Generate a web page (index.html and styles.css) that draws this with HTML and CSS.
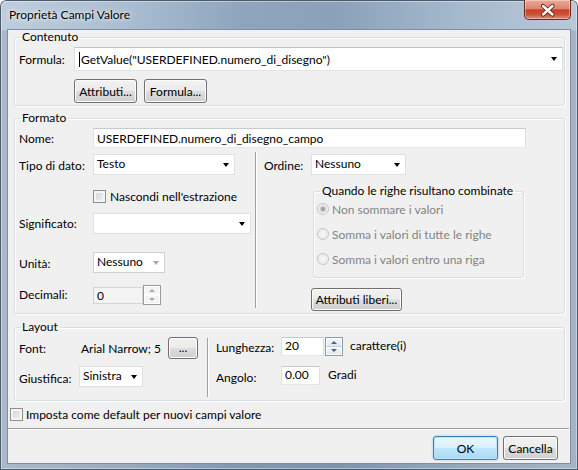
FILE: index.html
```html
<!DOCTYPE html>
<html>
<head>
  <meta charset="UTF-8">
  <title>Proprietà Campi Valore</title>
  <link rel="stylesheet" href="styles.css">
</head>
<body>
  <div class="window">
    <div class="titlebar">
      <span class="title">Proprietà Campi Valore</span>
      <div class="close-btn">
        <svg width="47" height="20" viewBox="0 0 47 20">
          <path d="M19 6 L28.5 14.5 M28.5 6 L19 14.5" stroke="#5b2218" stroke-width="4.2" stroke-linecap="round" fill="none"/>
          <path d="M19 6 L28.5 14.5 M28.5 6 L19 14.5" stroke="#ffffff" stroke-width="2.4" stroke-linecap="round" fill="none"/>
        </svg>
      </div>
    </div>

    <div class="client">
      <!-- Contenuto -->
      <fieldset class="group group-content">
        <legend>Contenuto</legend>
        <div class="row row-formula">
          <span class="lbl lbl-formula">Formula:</span>
          <div class="combo combo-formula"><span class="caret"></span><span class="combo-text">GetValue("USERDEFINED.numero_di_disegno")</span><span class="arrow"></span></div>
        </div>
        <div class="row row-buttons">
          <button class="btn btn-attr">Attributi...</button>
          <button class="btn btn-formula">Formula...</button>
        </div>
      </fieldset>

      <!-- Formato -->
      <fieldset class="group group-format">
        <legend>Formato</legend>
        <div class="row row-nome">
          <span class="lbl lbl-wide">Nome:</span>
          <div class="textbox textbox-nome">USERDEFINED.numero_di_disegno_campo</div>
        </div>
        <div class="cols">
          <div class="col-left">
            <div class="row row-tipo">
              <span class="lbl lbl-wide lbl-low">Tipo di dato:</span>
              <div class="combo combo-tipo"><span class="combo-text">Testo</span><span class="arrow"></span></div>
            </div>
            <div class="row row-check">
              <span class="checkbox"></span>
              <span class="check-label">Nascondi nell'estrazione</span>
            </div>
            <div class="row row-sig">
              <span class="lbl lbl-wide">Significato:</span>
              <div class="combo combo-sig"><span class="combo-text"></span><span class="arrow"></span></div>
            </div>
            <div class="row row-unita">
              <span class="lbl lbl-wide lbl-low">Unità:</span>
              <div class="combo combo-unita"><span class="combo-text">Nessuno</span><span class="arrow arrow-gray"></span></div>
            </div>
            <div class="row row-dec">
              <span class="lbl lbl-wide">Decimali:</span>
              <div class="textbox textbox-dec disabled">0</div>
              <div class="spin spin-dec"><span class="spin-up"></span><span class="spin-down"></span></div>
            </div>
          </div>
          <div class="vdiv vdiv-format"></div>
          <div class="col-right">
            <div class="row row-ordine">
              <span class="lbl lbl-ordine lbl-low">Ordine:</span>
              <div class="combo combo-ordine"><span class="combo-text">Nessuno</span><span class="arrow"></span></div>
            </div>
            <fieldset class="group group-inner">
              <legend>Quando le righe risultano combinate</legend>
              <div class="radio-row"><span class="radio checked"></span><span class="radio-label">Non sommare i valori</span></div>
              <div class="radio-row"><span class="radio"></span><span class="radio-label">Somma i valori di tutte le righe</span></div>
              <div class="radio-row"><span class="radio"></span><span class="radio-label">Somma i valori entro una riga</span></div>
            </fieldset>
            <button class="btn btn-liberi">Attributi liberi...</button>
          </div>
        </div>
      </fieldset>

      <!-- Layout -->
      <fieldset class="group group-layout">
        <legend>Layout</legend>
        <div class="cols">
          <div class="lay-left">
            <div class="row row-font">
              <span class="lbl lbl-font">Font:</span>
              <span class="font-value">Arial Narrow; 5</span>
              <button class="btn btn-dots">...</button>
            </div>
            <div class="row row-giust">
              <span class="lbl lbl-giust lbl-lower">Giustifica:</span>
              <div class="combo combo-giust"><span class="combo-text">Sinistra</span><span class="arrow"></span></div>
            </div>
          </div>
          <div class="vdiv vdiv-layout"></div>
          <div class="lay-right">
            <div class="row row-lung">
              <span class="lbl lbl-lung lbl-low">Lunghezza:</span>
              <div class="textbox textbox-lung">20</div>
              <div class="spin spin-lung active"><span class="spin-up"></span><span class="spin-down"></span></div>
              <span class="unit unit-lung">carattere(i)</span>
            </div>
            <div class="row row-ang">
              <span class="lbl lbl-lung lbl-lower">Angolo:</span>
              <div class="textbox textbox-ang">0.00</div>
              <span class="unit unit-ang">Gradi</span>
            </div>
          </div>
        </div>
      </fieldset>

      <div class="row row-default">
        <span class="checkbox"></span>
        <span class="check-label default-label">Imposta come default per nuovi campi valore</span>
      </div>

      <div class="separator"></div>

      <div class="row row-actions">
        <button class="btn btn-ok">OK</button>
        <button class="btn btn-cancel">Cancella</button>
      </div>
    </div>
  </div>
</body>
</html>
```

FILE: styles.css
```css
* {
  box-sizing: border-box;
}

body {
  margin: 0;
  padding: 0;
  width: 578px;
  height: 470px;
  overflow: hidden;
  font-family: Lato, "Noto Sans", sans-serif;
  font-size: 12px;
  color: #000;
  background: #ffffff;
}

.window {
  width: 578px;
  height: 470px;
  border-radius: 6px 6px 0 0;
  background:
    linear-gradient(to bottom, rgba(255, 255, 255, 0) 0, rgba(255, 255, 255, 0) 30px, rgba(70, 90, 112, 0.18) 31px, rgba(70, 90, 112, 0.18) 100%),
    linear-gradient(to right, #bfcedd 0%, #aabdd1 22%, #8ea5bd 42%, #8aa1b9 58%, #a4b8cc 78%, #b8c8d8 100%);
  box-shadow: inset 0 0 0 1px #4a5b6e, inset 0 0 0 2px rgba(255, 255, 255, 0.4);
}

.titlebar {
  height: 29px;
  display: flex;
  align-items: flex-start;
  justify-content: space-between;
}

.title {
  margin-left: 9px;
  line-height: 29px;
  color: #000;
  text-shadow: 0 0 6px rgba(255, 255, 255, 0.9), 0 0 3px rgba(255, 255, 255, 0.7);
}

.close-btn {
  width: 47px;
  height: 20px;
  margin-right: 7px;
  border: 1px solid #6b2a1f;
  border-top: none;
  border-radius: 0 0 5px 5px;
  background: linear-gradient(#eaa898 0%, #dc8570 45%, #c7412a 52%, #cc4f36 75%, #e0917c 100%);
  box-shadow: inset 0 0 0 1px rgba(255, 255, 255, 0.35);
  overflow: hidden;
}

.close-btn svg {
  display: block;
  margin-left: -1px;
}

.client {
  margin-left: 7px;
  width: 564px;
  height: 435px;
  border: 1px solid #7d8fa4;
  background: #f0f0f0;
  padding: 0 5px 0 2px;
}

/* group boxes */
.group {
  margin: 0 0 0 4px;
  padding: 0;
  width: 551px;
  min-width: 0;
  border: 1px solid #d5dfe5;
  border-radius: 3px;
  box-shadow: inset 1px 1px 0 #fff, 1px 1px 0 #fff;
}

.group legend {
  margin-left: 5px;
  padding: 0 2px;
  line-height: 14px;
  font-size: 12px;
}

.group-content {
  padding-bottom: 2px;
}

.group-format {
  margin-top: 5px;
  padding-bottom: 2px;
}

.group-layout {
  margin-top: 6px;
  padding-bottom: 13px;
}

.row {
  display: flex;
  align-items: center;
}

.lbl {
  flex: none;
  white-space: nowrap;
}

.lbl-low {
  padding-top: 2px;
}

.lbl-lower {
  padding-top: 4px;
}

/* Contenuto */
.row-formula {
  margin-top: 3px;
  padding-left: 4px;
}

.lbl-formula {
  width: 55px;
}

.row-buttons {
  margin-top: 8px;
  padding-left: 59px;
}

/* controls */
.combo {
  display: flex;
  align-items: center;
  height: 21px;
  padding-left: 3px;
  padding-bottom: 2px;
  background: #fff;
  border: 1px solid #e0e0e0;
  white-space: nowrap;
  overflow: hidden;
}

.combo-text {
  flex: 1;
  overflow: hidden;
}

.arrow {
  flex: none;
  width: 0;
  height: 0;
  margin-right: 5px;
  margin-top: 2px;
  border-left: 3.5px solid transparent;
  border-right: 3.5px solid transparent;
  border-top: 4px solid #000;
}

.arrow-gray {
  border-top-color: #a8a8a8;
}

.combo-formula {
  width: 489px;
  height: 24px;
  padding-left: 4px;
  padding-bottom: 0;
  border-color: #b9c6d3 #d9e0e7 #dfe5ea #d9e0e7;
}

.combo-formula .arrow {
  margin-top: 0;
}

.caret {
  flex: none;
  width: 1px;
  height: 15px;
  margin-right: 1px;
  background: #000;
}

.textbox {
  display: flex;
  align-items: center;
  height: 20px;
  padding-left: 3px;
  background: #fff;
  border: 1px solid;
  border-color: #c6cbd1 #dde1e6 #e3e9ef #dde1e6;
  white-space: nowrap;
}

.textbox.disabled {
  background: #f4f4f4;
  border-color: #d5d5d5;
}

.btn {
  height: 24px;
  padding: 0;
  font-family: Lato, "Noto Sans", sans-serif;
  font-size: 12px;
  color: #000;
  border: 1px solid #707070;
  border-radius: 3px;
  background: linear-gradient(#f2f2f2 0%, #ebebeb 48%, #dddddd 52%, #cfcfcf 100%);
  box-shadow: inset 0 0 0 1px #fcfcfc;
}

.btn-attr {
  width: 63px;
}

.btn-formula {
  width: 63px;
  margin-left: 7px;
}

/* Formato */
.row-nome {
  margin-top: 3px;
  padding-left: 4px;
}

.lbl-wide {
  width: 74px;
}

.textbox-nome {
  width: 433px;
}

.cols {
  display: flex;
}

.group-format .cols {
  margin-top: 4px;
}

.col-left {
  width: 240px;
  padding-left: 4px;
}

.vdiv {
  flex: none;
  width: 1px;
  background: #a0a0a0;
  box-shadow: 1px 0 0 #fff;
}

.vdiv-format {
  margin-bottom: 3px;
}

.col-right {
  flex: 1;
  padding-left: 8px;
}

.row-tipo {
  margin-top: 2px;
}

.combo-tipo {
  width: 142px;
}

.row-check {
  height: 13px;
  margin-top: 15px;
  padding-left: 74px;
}

.checkbox {
  flex: none;
  width: 13px;
  height: 13px;
  border: 1px solid #8e8f8f;
  background: linear-gradient(135deg, #cfd1d4 0%, #f5f5f5 100%);
  box-shadow: inset 0 0 0 2px #f4f4f4;
}

.check-label {
  margin-left: 4px;
  white-space: nowrap;
}

.row-sig {
  margin-top: 10px;
}

.combo-sig {
  width: 158px;
}

.row-unita {
  margin-top: 18px;
}

.combo-unita {
  width: 72px;
  border-color: #d0d0d0;
}

.row-dec {
  margin-top: 12px;
  align-items: flex-start;
}

.row-dec .lbl {
  line-height: 20px;
}

.textbox-dec {
  width: 50px;
  height: 17px;
  margin-top: 2px;
}

.spin {
  flex: none;
  display: flex;
  flex-direction: column;
  width: 18px;
  border: 1px solid #9a9a9a;
  background: #f4f4f4;
}

.spin span {
  flex: 1;
  display: flex;
  align-items: center;
  justify-content: center;
  border: 1px solid #fff;
}

.spin-up::after {
  content: "";
  border-left: 3px solid transparent;
  border-right: 3px solid transparent;
  border-bottom: 3px solid #a9a9a9;
}

.spin-down::after {
  content: "";
  border-left: 3px solid transparent;
  border-right: 3px solid transparent;
  border-top: 3px solid #a9a9a9;
}

.spin-dec {
  height: 20px;
}

.spin.active {
  border-color: #8c9aab;
}

.spin.active span {
  background: linear-gradient(#f3f7fb, #dce7f3);
}

.spin.active .spin-up {
  border-bottom-color: #c4d1de;
}

.spin.active .spin-up::after {
  border-bottom-color: #4d6185;
}

.spin.active .spin-down::after {
  border-top-color: #4d6185;
}

.row-ordine {
  margin-top: 2px;
}

.lbl-ordine {
  width: 47px;
}

.combo-ordine {
  width: 95px;
}

.group-inner {
  width: 211px;
  margin: 9px 0 0 49px;
  padding: 0 0 10px 3px;
}

.group-inner legend {
  margin-left: 3px;
}

.radio-row {
  display: flex;
  align-items: center;
  height: 16px;
  margin-top: 9px;
}

.radio-row:first-of-type {
  margin-top: 3px;
}

.radio {
  flex: none;
  width: 12px;
  height: 12px;
  border: 1px solid #c6c6c6;
  border-radius: 50%;
  background: radial-gradient(circle at 50% 50%, #f6f6f6 0, #e8e8e8 100%);
}

.radio.checked {
  background: radial-gradient(circle at 50% 50%, #9a9a9a 0, #b4b4b4 2.2px, #e2e2e2 3px, #f4f4f4 5px);
}

.radio-label {
  margin-left: 3px;
  color: #838383;
  white-space: nowrap;
}

.btn-liberi {
  display: block;
  width: 91px;
  height: 23px;
  margin: 10px 0 0 47px;
}

/* Layout */
.lay-left {
  width: 192px;
  padding-left: 4px;
}

.vdiv-layout {
  margin-top: 4px;
  margin-bottom: -10px;
}

.lay-right {
  flex: 1;
  padding-left: 8px;
}

.row-font {
  margin-top: 3px;
}

.lbl-font {
  width: 62px;
}

.font-value {
  width: 87px;
  white-space: nowrap;
}

.btn-dots {
  width: 30px;
  height: 22px;
  line-height: 14px;
}

.row-giust {
  margin-top: 7px;
}

.lbl-giust {
  width: 60px;
}

.combo-giust {
  width: 64px;
}

.row-lung {
  margin-top: 3px;
}

.lbl-lung {
  width: 65px;
}

.textbox-lung {
  width: 43px;
  height: 19px;
  padding-bottom: 2px;
}

.spin-lung {
  height: 19px;
  margin-left: 1px;
}

.unit {
  white-space: nowrap;
}

.unit-lung {
  margin-left: 7px;
  padding-bottom: 2px;
}

.row-ang {
  margin-top: 10px;
}

.textbox-ang {
  width: 39px;
  height: 19px;
  padding-bottom: 2px;
}

.unit-ang {
  margin-left: 8px;
  padding-bottom: 2px;
}

/* bottom */
.row-default {
  height: 13px;
  margin-top: 7px;
}

.default-label {
  margin-left: 3px;
}

.separator {
  margin: 7px 0 0 -2px;
  width: 561px;
  border-top: 1px solid #a0a0a0;
  border-bottom: 1px solid #fff;
}

.row-actions {
  margin-top: 6px;
  justify-content: flex-end;
  padding-right: 7px;
}

.btn-ok {
  width: 65px;
  border-color: #3c7fb1;
  background: linear-gradient(#eaf6fd 0%, #d9f0fc 48%, #bee6fd 52%, #a7d9f5 100%);
  box-shadow: inset 0 0 0 1px #bfe3f7, 0 0 2px #7fc4ec;
}

.btn-cancel {
  width: 55px;
  margin-left: 5px;
}
```
